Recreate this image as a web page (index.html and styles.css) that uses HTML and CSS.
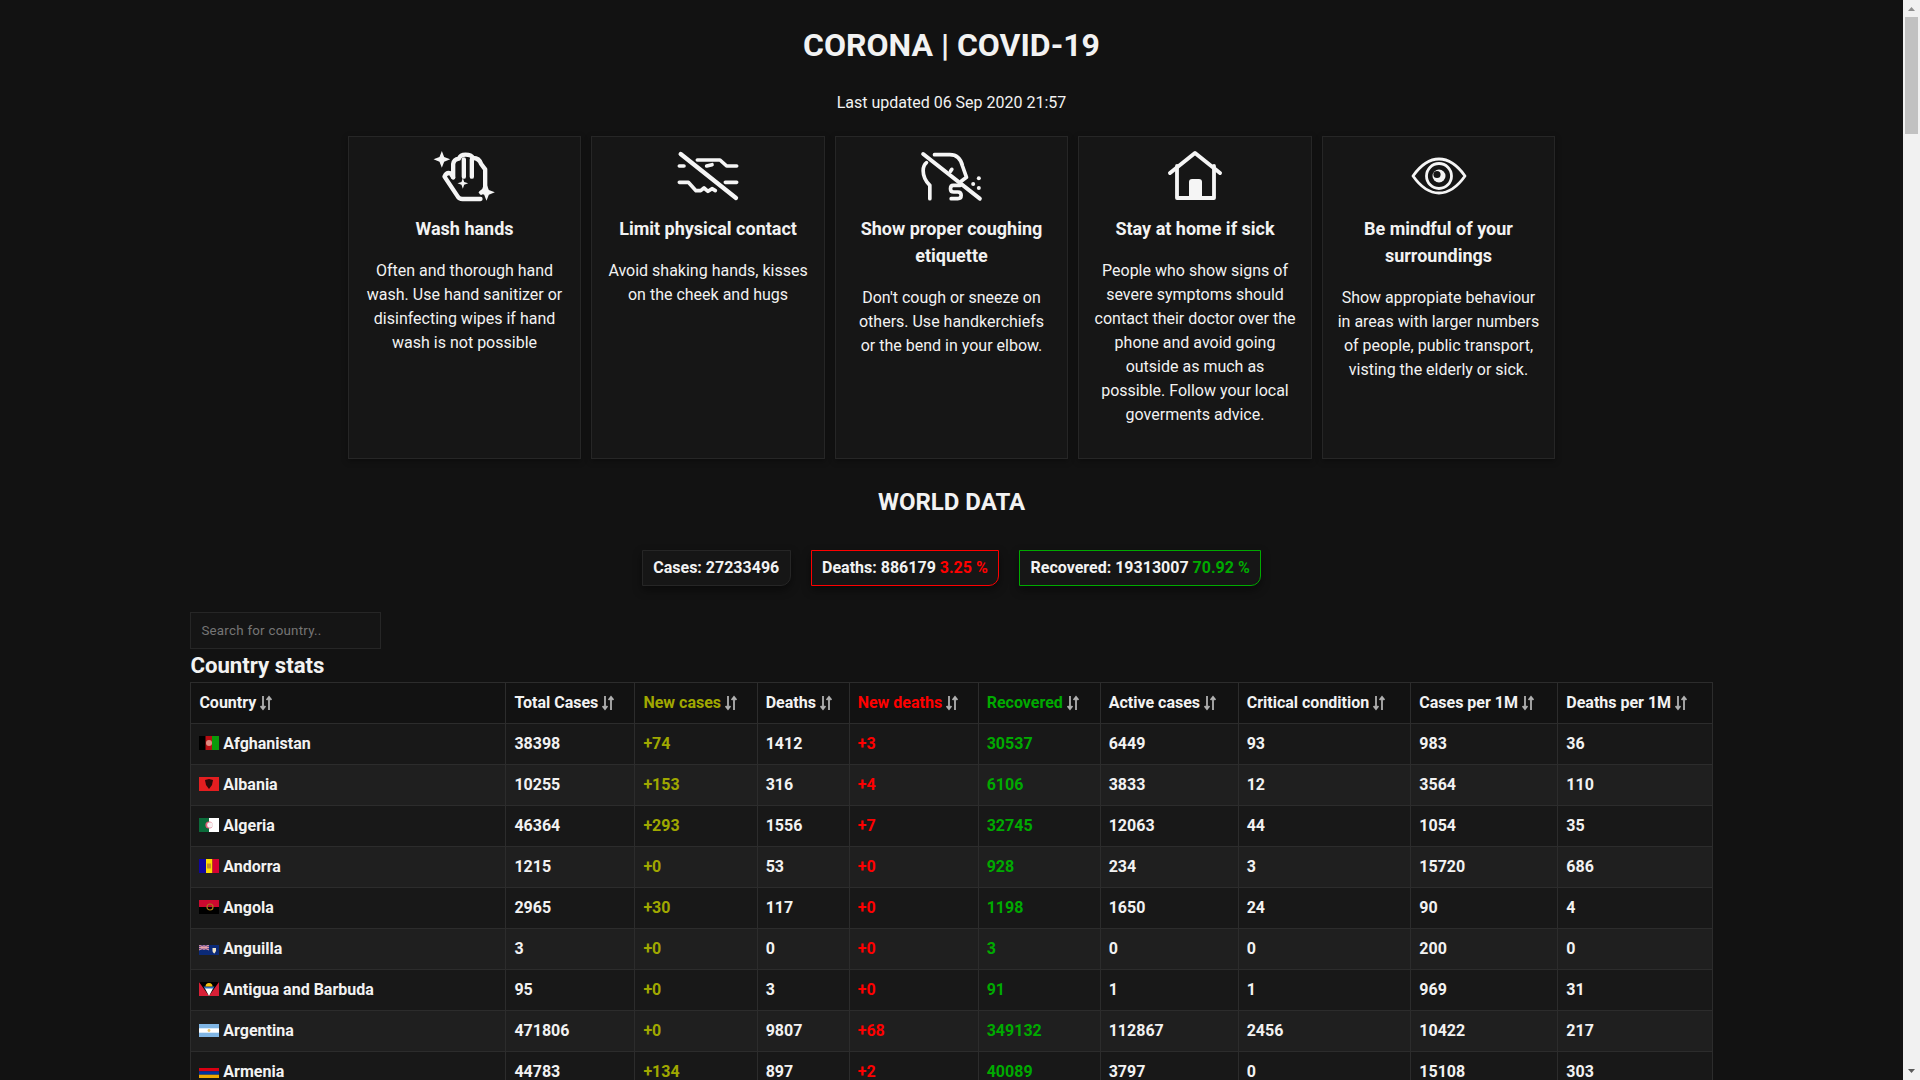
FILE: index.html
```html
<!DOCTYPE html>
<html lang="en">
<head>
<meta charset="utf-8">
<title>CORONA | COVID-19</title>
<link rel="stylesheet" href="styles.css">
</head>
<body>
<svg class="defs" width="0" height="0" aria-hidden="true">
  <symbol id="sort" viewBox="0 0 12 16">
    <path d="M3 1v13M.6 11 3 14l2.400-3" fill="none" stroke="#b0b0b0" stroke-width="1.800"/>
    <path d="M9 15V2M6.600 5 9 2l2.400 3" fill="none" stroke="#b0b0b0" stroke-width="1.800"/>
  </symbol>
</svg>
<div class="page">
<main class="main">
  <h1 class="title">CORONA | COVID-19</h1>
  <p class="updated">Last updated 06 Sep 2020 21:57</p>

  <section class="cards">
    <article class="card">
      <svg class="icon" viewBox="7.5 12 192 192" fill="none" stroke="#f5f5f5" stroke-width="13" stroke-linecap="round" stroke-linejoin="round">
        <path d="M68 112V72Q70 58 85 56Q90 44 105 44Q122 44 128 54Q146 54 152 72L164 88V140Q164 150 152 158"/>
        <path d="M68 112 60 100Q48 96 42 110L82 170Q86 177 96 177H150"/>
        <path d="M100 58V110M124 58V110"/>
        <path fill="#f5f5f5" stroke="none" d="M34 33 41 51 59 58 41 65 34 83 27 65 9 58 27 51ZM97 114 101 126 113 130 101 134 97 146 93 134 81 130 93 126ZM168 132 175 150 193 157 175 164 168 182 161 164 143 157 161 150Z"/>
      </svg>
      <h3 class="card-title">Wash hands</h3>
      <p class="card-text">Often and thorough hand wash. Use hand sanitizer or disinfecting wipes if hand wash is not possible</p>
    </article>
    <article class="card">
      <svg class="icon" viewBox="18 12 192 192" fill="none" stroke="#f5f5f5" stroke-width="11" stroke-linecap="round" stroke-linejoin="round">
        <path d="M28 78H42M82 60H150L170 78H200M110 78 126 74"/>
        <path d="M28 127H55L78 152H92L102 144 114 154 126 146 136 152M166 127H200"/>
        <path stroke-width="13" d="M32 42 198 174"/>
      </svg>
      <h3 class="card-title">Limit physical contact</h3>
      <p class="card-text">Avoid shaking hands, kisses on the cheek and hugs</p>
    </article>
    <article class="card">
      <svg class="icon" viewBox="28.5 12 192 192" fill="none" stroke="#f5f5f5" stroke-width="11" stroke-linecap="round" stroke-linejoin="round">
        <path d="M58 176V136Q38 116 38 92Q38 76 48 68"/>
        <path d="M72 44H118Q148 44 156 78L168 112 152 124"/>
        <path d="M150 136H128Q120 136 120 146 120 156 130 156H142Q152 156 152 166 152 176 142 176H122"/>
        <path d="M120 94 124 88"/>
        <path stroke-width="12" d="M38 42 208 176"/>
        <g fill="#f5f5f5" stroke="none"><circle cx="205" cy="115" r="6"/><circle cx="188" cy="132" r="6"/><circle cx="205" cy="144" r="6"/></g>
      </svg>
      <h3 class="card-title">Show proper coughing etiquette</h3>
      <p class="card-text">Don't cough or sneeze on others. Use handkerchiefs or the bend in your elbow.</p>
    </article>
    <article class="card">
      <svg class="icon" viewBox="0 0 64 64" fill="none" stroke="#f5f5f5" stroke-width="3.800" stroke-linecap="round" stroke-linejoin="round">
        <path d="M7 29 32 9 57 29" stroke-width="4"/>
        <path d="M14 22V54H51V22"/>
        <path fill="#f5f5f5" stroke="none" d="M26 54V38Q26 35 29 35H36Q39 35 39 38V54Z"/>
      </svg>
      <h3 class="card-title">Stay at home if sick</h3>
      <p class="card-text">People who show signs of severe symptoms should contact their doctor over the phone and avoid going outside as much as possible. Follow your local goverments advice.</p>
    </article>
    <article class="card">
      <svg class="icon" viewBox="0 0 64 64" fill="none" stroke="#f5f5f5" stroke-width="2.800" stroke-linecap="round" stroke-linejoin="round">
        <path d="M7 32Q19 15 33 15 47 15 59 32 47 49 33 49 19 49 7 32Z"/>
        <circle cx="33" cy="32" r="12.500"/>
        <circle cx="33" cy="32" r="6.500" fill="#f5f5f5" stroke="none"/>
        <circle cx="31" cy="30.500" r="3.600" fill="#161616" stroke="none"/>
      </svg>
      <h3 class="card-title">Be mindful of your surroundings</h3>
      <p class="card-text">Show appropiate behaviour in areas with larger numbers of people, public transport, visting the elderly or sick.</p>
    </article>
  </section>

  <h2 class="world">WORLD DATA</h2>
  <div class="badges">
    <div class="badge">Cases: 27233496</div>
    <div class="badge badge-red">Deaths: 886179 <span class="red">3.25 %</span></div>
    <div class="badge badge-green">Recovered: 19313007 <span class="green">70.92 %</span></div>
  </div>

  <section class="stats">
    <input class="search" type="text" placeholder="Search for country..">
    <h2 class="stats-title">Country stats</h2>
    <table class="table">
      <thead>
        <tr>
          <th>Country <svg class="sort"><use href="#sort"/></svg></th>
          <th>Total Cases <svg class="sort"><use href="#sort"/></svg></th>
          <th class="yellow">New cases <svg class="sort"><use href="#sort"/></svg></th>
          <th>Deaths <svg class="sort"><use href="#sort"/></svg></th>
          <th class="red">New deaths <svg class="sort"><use href="#sort"/></svg></th>
          <th class="green">Recovered <svg class="sort"><use href="#sort"/></svg></th>
          <th>Active cases <svg class="sort"><use href="#sort"/></svg></th>
          <th>Critical condition <svg class="sort"><use href="#sort"/></svg></th>
          <th>Cases per 1M <svg class="sort"><use href="#sort"/></svg></th>
          <th>Deaths per 1M <svg class="sort"><use href="#sort"/></svg></th>
        </tr>
      </thead>
      <tbody>
        <tr>
          <td><svg class="flag" viewBox="0 0 20 14"><rect width="7" height="14" fill="#000"/><rect x="6.500" width="7" height="14" fill="#b80d12"/><rect x="13" width="7" height="14" fill="#0a9a0a"/><circle cx="10" cy="7" r="3" fill="#e08a80"/></svg> Afghanistan</td>
          <td>38398</td><td class="yellow">+74</td><td>1412</td><td class="red">+3</td><td class="green">30537</td><td>6449</td><td>93</td><td>983</td><td>36</td>
        </tr>
        <tr>
          <td><svg class="flag" viewBox="0 0 20 14"><rect width="20" height="14" fill="#e41e20"/><path d="M6 3 10 2 14 3 13 8 10 12 7 8Z" fill="#2a0a0a"/></svg> Albania</td>
          <td>10255</td><td class="yellow">+153</td><td>316</td><td class="red">+4</td><td class="green">6106</td><td>3833</td><td>12</td><td>3564</td><td>110</td>
        </tr>
        <tr>
          <td><svg class="flag" viewBox="0 0 20 14"><rect width="10" height="14" fill="#0b6b3a"/><rect x="10" width="10" height="14" fill="#fff"/><circle cx="10" cy="7" r="3.600" fill="#e0607a"/><circle cx="11" cy="7" r="2.800" fill="#f4f0f0"/></svg> Algeria</td>
          <td>46364</td><td class="yellow">+293</td><td>1556</td><td class="red">+7</td><td class="green">32745</td><td>12063</td><td>44</td><td>1054</td><td>35</td>
        </tr>
        <tr>
          <td><svg class="flag" viewBox="0 0 20 14"><rect width="7" height="14" fill="#10069f"/><rect x="7" width="6.500" height="14" fill="#fedd00"/><rect x="13.500" width="6.500" height="14" fill="#d50032"/><rect x="8" y="4.500" width="4" height="5" fill="#c7902a"/></svg> Andorra</td>
          <td>1215</td><td class="yellow">+0</td><td>53</td><td class="red">+0</td><td class="green">928</td><td>234</td><td>3</td><td>15720</td><td>686</td>
        </tr>
        <tr>
          <td><svg class="flag" viewBox="0 0 20 14"><rect width="20" height="7" fill="#cc092f"/><rect y="7" width="20" height="7" fill="#000"/><circle cx="11" cy="7" r="3" fill="none" stroke="#a67c1a" stroke-width="1.200"/></svg> Angola</td>
          <td>2965</td><td class="yellow">+30</td><td>117</td><td class="red">+0</td><td class="green">1198</td><td>1650</td><td>24</td><td>90</td><td>4</td>
        </tr>
        <tr>
          <td><svg class="flag flag-10" viewBox="0 0 20 10"><rect width="20" height="10" fill="#0b2a78"/><rect width="10" height="5" fill="#5a4a8a"/><path d="M0 0 10 5M10 0 0 5M5 0V5M0 2.500H10" stroke="#e9a0a8" stroke-width="1"/><path d="M13.500 3H17V6Q15.500 8.500 15.200 8.500 13.500 7 13.500 6Z" fill="#f2e6c8"/></svg> Anguilla</td>
          <td>3</td><td class="yellow">+0</td><td>0</td><td class="red">+0</td><td class="green">3</td><td>0</td><td>0</td><td>200</td><td>0</td>
        </tr>
        <tr>
          <td><svg class="flag" viewBox="0 0 20 14"><rect width="20" height="14" fill="#d81f36"/><path d="M0 0H20L10 14Z" fill="#000"/><path d="M5.700 6H14.300L10 14Z" fill="#fff"/><path d="M4.500 4.500H15.500L14.300 6.500H5.700Z" fill="#2a6fc0"/><path d="M6.500 4.500A3.500 3.500 0 0 1 13.500 4.500Z" fill="#f5c211"/></svg> Antigua and Barbuda</td>
          <td>95</td><td class="yellow">+0</td><td>3</td><td class="red">+0</td><td class="green">91</td><td>1</td><td>1</td><td>969</td><td>31</td>
        </tr>
        <tr>
          <td><svg class="flag flag-13" viewBox="0 0 20 13"><rect width="20" height="13" fill="#7fb5e4"/><rect y="4.300" width="20" height="4.400" fill="#fff"/><circle cx="10" cy="6.500" r="1.400" fill="#e8c46a"/></svg> Argentina</td>
          <td>471806</td><td class="yellow">+0</td><td>9807</td><td class="red">+68</td><td class="green">349132</td><td>112867</td><td>2456</td><td>10422</td><td>217</td>
        </tr>
        <tr>
          <td><svg class="flag flag-10" viewBox="0 0 20 10"><rect width="20" height="3.400" fill="#d90012"/><rect y="3.300" width="20" height="3.400" fill="#0033a0"/><rect y="6.700" width="20" height="3.300" fill="#f2a800"/></svg> Armenia</td>
          <td>44783</td><td class="yellow">+134</td><td>897</td><td class="red">+2</td><td class="green">40089</td><td>3797</td><td>0</td><td>15108</td><td>303</td>
        </tr>
      </tbody>
    </table>
  </section>
</main>
<aside class="scrollbar" aria-hidden="true">
  <svg class="sb-arrow" viewBox="0 0 17 17"><path d="M5 11 8.500 7 12 11Z" fill="#8f8f8f"/></svg>
  <div class="sb-thumb"></div>
  <svg class="sb-arrow sb-down" viewBox="0 0 17 17"><path d="M5 6 8.500 10 12 6Z" fill="#5a5a5a"/></svg>
</aside>
</div>
</body>
</html>
```
FILE: styles.css
```css
* { box-sizing: border-box; }
html, body { margin: 0; height: 100%; overflow: hidden; }
body {
  background: #121212;
  color: #f2f2f2;
  font-family: Roboto, "Liberation Sans", sans-serif;
  font-size: 16px;
  line-height: 24px;
}
.defs { position: absolute; }
.page { display: flex; height: 1080px; overflow: hidden; }
.main { flex: 1; min-width: 0; overflow: hidden; padding-top: 26px; }

.title { margin: 0; text-align: center; font-size: 32px; line-height: 38px; font-weight: 700; }
.updated { margin: 27px 0 21px; text-align: center; }

.cards { display: flex; gap: 10.4px; width: 1207px; margin: 0 auto; }
.card {
  flex: 1 1 0;
  min-width: 0;
  background: #161616;
  border: 1px solid #262626;
  box-shadow: 0 2px 6px rgba(0,0,0,.35);
  padding: 7px 14.4px 15px;
  text-align: center;
}
.icon { display: block; width: 64px; height: 64px; margin: 0 auto 7px; }
.card-title { margin: 0 0 17px; font-size: 18px; line-height: 27px; font-weight: 700; }
.card-text { margin: 0 0 16px; font-weight: 400; }

.world { margin: 29px 0 34px; text-align: center; font-size: 24px; line-height: 28px; font-weight: 700; }

.badges { display: flex; justify-content: center; gap: 20px; }
.badge {
  background: #161616;
  border: 1px solid #262626;
  border-bottom-right-radius: 10px;
  box-shadow: 0 4px 10px rgba(0,0,0,.45);
  padding: 5px 10.4px;
  font-weight: 700;
  white-space: nowrap;
}
.badge-red { border-color: #f00; }
.badge-green { border-color: #0a0; }

.red { color: #f00; }
.green { color: #0a0; }
.yellow { color: #a0a800; }

.stats { width: 1521.6px; margin: 26px 0 0 190.4px; }
.search {
  display: block;
  width: 191px;
  height: 37px;
  padding: 0 10px;
  background: #151515;
  border: 1px solid #262626;
  color: #f2f2f2;
  font: 400 13.333px Roboto, sans-serif;
  letter-spacing: .25px;
  outline: none;
}
.search::placeholder { color: #757575; opacity: 1; }
.stats-title { margin: 2px 0 2px; font-size: 22.2px; line-height: 29px; font-weight: 700; }

.table { width: 100%; border-collapse: collapse; table-layout: fixed; }
.table th, .table td {
  height: 41px;
  padding: 8px;
  border: 1px solid #2c2c2c;
  text-align: left;
  font-weight: 700;
  white-space: nowrap;
  overflow: hidden;
}
.table th:nth-child(1) { width: 315px; }
.table th:nth-child(2) { width: 129px; }
.table th:nth-child(3) { width: 122.3px; }
.table th:nth-child(4) { width: 92px; }
.table th:nth-child(5) { width: 129px; }
.table th:nth-child(6) { width: 122px; }
.table th:nth-child(7) { width: 138px; }
.table th:nth-child(8) { width: 172.6px; }
.table th:nth-child(9) { width: 147px; }
.table th:nth-child(10) { width: 154.7px; }
.table thead tr { background: #121212; }
.table tbody tr:nth-child(odd) { background: #181818; }
.table tbody tr:nth-child(even) { background: #1f1f1f; }

.sort { width: 12px; height: 16px; vertical-align: -3px; }
.flag { width: 20px; height: 14px; vertical-align: -1px; }
.flag-10 { height: 10px; }
.flag-13 { height: 13px; }

.scrollbar { flex: 0 0 17px; display: flex; flex-direction: column; background: #f1f1f1; }
.sb-arrow { display: block; width: 17px; height: 17px; flex: none; }
.sb-thumb { width: 13px; height: 117px; margin: 0 2px; background: #c1c1c1; }
.sb-down { margin-top: auto; }
```
